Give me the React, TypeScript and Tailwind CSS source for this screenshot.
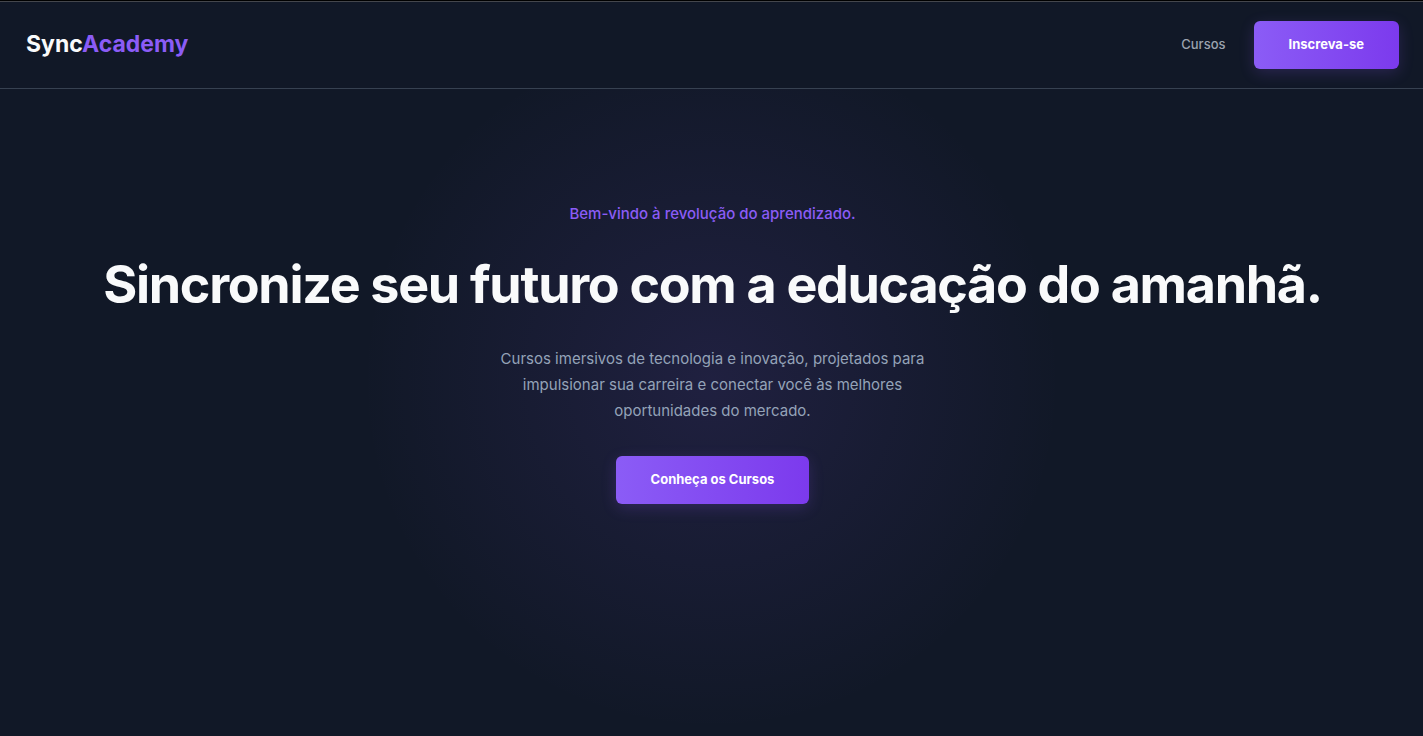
export default function App() {
  return (
    <div className="flex min-h-screen flex-col border-t border-black bg-[#111827] font-['Inter',sans-serif] text-gray-50">
      <header className="flex items-center justify-between border-t border-b border-t-[#44464c] border-b-[#374151] py-[19px] pr-6 pl-[26px]">
        <a href="#" className="pb-0.5 text-[23px] leading-8 font-bold">
          Sync<span className="text-[#8b5cf6]">Academy</span>
        </a>
        <nav className="flex items-center gap-7">
          <a href="#cursos" className="text-[13px] font-medium text-[#9ca3af]">
            Cursos
          </a>
          <button
            type="button"
            className="h-12 rounded-md bg-[linear-gradient(90deg,#8b5cf6,#7c3aed)] px-[35px] text-[13px] font-bold text-white shadow-[0_4px_15px_rgba(139,92,246,0.2)]"
          >
            Inscreva-se
          </button>
        </nav>
      </header>
      <main className="flex flex-1 flex-col items-center bg-[radial-gradient(circle_at_50%_45%,rgba(139,92,246,0.12),transparent_350px)] pt-[113px] pr-6 pl-[26px] text-center">
        <p className="text-[15px] leading-6 font-medium text-[#8b5cf6]">
          Bem-vindo à revolução do aprendizado.
        </p>
        <h1 className="mt-7 text-[52px] leading-[62px] font-bold tracking-tight">
          Sincronize seu futuro com a educação do amanhã.
        </h1>
        <p className="mt-[30px] max-w-[450px] text-[15px] leading-[26px] text-[#94a3b8]">
          Cursos imersivos de tecnologia e inovação, projetados para impulsionar
          sua carreira e conectar você às melhores oportunidades do mercado.
        </p>
        <button
          type="button"
          className="mt-8 h-12 rounded-md bg-[linear-gradient(90deg,#8b5cf6,#7c3aed)] px-[35px] text-[13px] font-bold text-white shadow-[0_4px_15px_rgba(139,92,246,0.2)]"
        >
          Conheça os Cursos
        </button>
      </main>
    </div>
  );
}
